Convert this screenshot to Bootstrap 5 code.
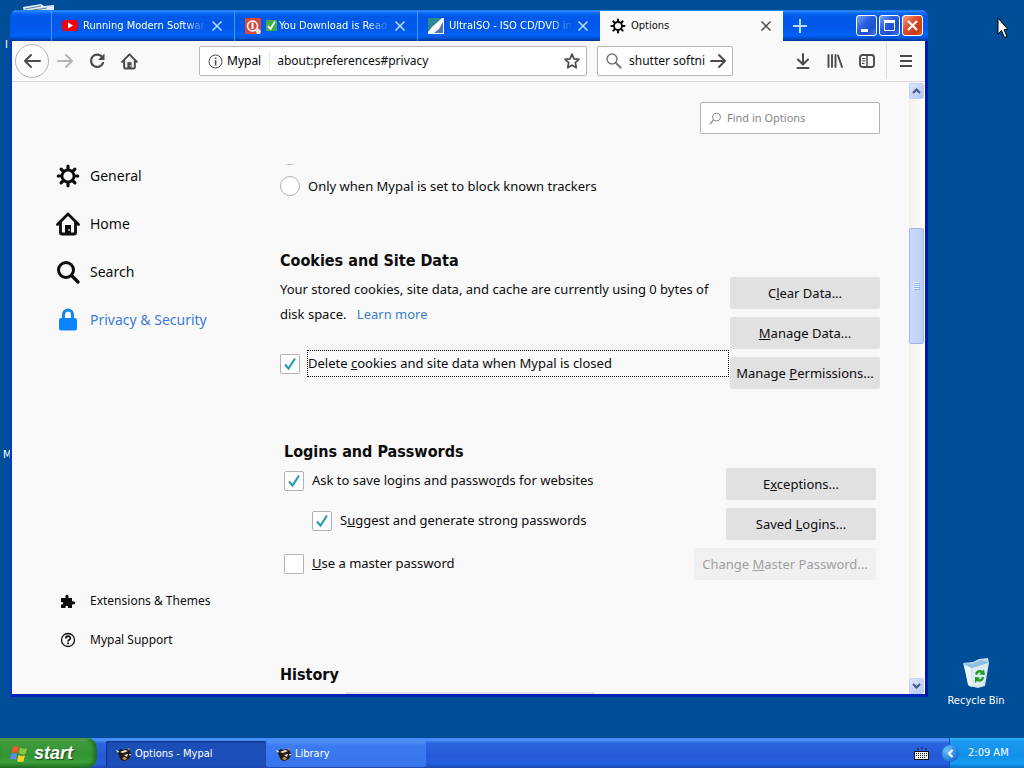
<!DOCTYPE html>
<html lang="en">
<head>
<meta charset="utf-8">
<meta name="viewport" content="width=device-width, initial-scale=1">
<title>Options - Mypal</title>
<link href="https://cdn.jsdelivr.net/npm/bootstrap@5.3.0/dist/css/bootstrap.min.css" rel="stylesheet">
<style>
:root{--ui:"DejaVu Sans Condensed","DejaVu Sans",sans-serif;--txt:"Noto Sans",sans-serif}
body{background:#004e98;font:11px/16px var(--ui);color:#0c0c0d}
button,input{font:inherit}
svg{flex:none;display:block}
.plain{border:0;background:none;padding:0;color:inherit;display:flex;align-items:center;justify-content:center}

/* desktop */
.desk{padding:10px 0 0 10px;min-height:0}
.behind{position:absolute;z-index:0;color:#fff}
.desk-side{width:96px;flex:none}
.bin{color:#fff;text-decoration:none;gap:4px;margin-bottom:29px}
.pointer{position:absolute;right:15px;top:17px}

/* window frame */
.win{background:#f9f9fa;border:solid #0a33d6;border-width:0 3px 3px 2px;border-right-color:#0018b0;border-bottom-color:#0621b5;border-radius:7px 7px 0 0;min-width:0;margin-bottom:41px}
.title-bar{flex:none;height:31px;margin:0 -3px 0 -2px;padding:0 5px 0 41px;border-radius:7px 7px 0 0;color:#fff;background:linear-gradient(#0a6cf0 0,#2f8dff 1px,#0a6af5 3px,#0058e8 6px,#0059ea 60%,#0062f8 80%,#0055dc 28px,#003ca0 30px,#0036a0)}
.tab-item{flex:0 1 183px;min-width:0;border-left:1px solid #4a94f4;padding:0 11px 0 10px;gap:5px}
.tab-item.on{background:#f9f9fa;color:#0c0c0d;border-top:1px solid #2090f8;border-left:0}
.tab-item .name{flex:1;min-width:0;overflow:hidden;white-space:nowrap;color:inherit;text-decoration:none;-webkit-mask-image:linear-gradient(90deg,#000 82%,transparent);mask-image:linear-gradient(90deg,#000 82%,transparent)}
.tab-item.on .name{-webkit-mask-image:none;mask-image:none}
.tab-item .plain{color:#b9dcff}
.tab-item.on .plain{color:#4a4a4f}
.new-tab{width:34px;color:#b9dcff}
.caps{gap:2px}
.cap{width:21px;height:21px;border:1px solid #fff;border-radius:3px;background:linear-gradient(135deg,#7aa4f6,#2a5fe0 40%,#1d4fd0 70%,#3d78ee);padding:0}
.cap.shut{background:linear-gradient(135deg,#f2a088,#e0502c 40%,#c93a14 75%,#e4613a)}

/* toolbar */
.tools{flex:none;height:41px;padding:0 3px;border-bottom:1px solid #dcdcdd;color:#4a4a4f}
.tool{width:32px;height:32px}
.back{width:34px;height:34px;border:1px solid #b4b4b6;border-radius:50%;background:#fdfdfe}
.field{height:30px;background:#fff;border:1px solid #b8b8ba;border-radius:2px}
.field input,.find input{border:0;background:none;outline:0;padding:0;min-width:0;flex:1;color:#0c0c0d}
.addr{flex:1;margin-left:54px;padding:0 6px 0 8px;font:12px/18px var(--txt);min-width:0}
.ident{gap:4px;padding-right:8px;margin-right:7px;border-right:1px solid #e4e4e5}
.seek{width:136px;margin:0 54px 0 10px;padding:0 5px 0 8px;gap:7px;font:12px/18px var(--txt)}
.seek button{margin-left:-7px}
.rule{width:1px;height:36px;background:#dcdcdd;margin:0 3px}

/* options page */
.cats{width:268px;padding:70px 0 35px 44px;flex:none}
.cat{height:48px;gap:10px;font:14px/20px var(--txt);color:#0c0c0d;text-decoration:none}
.cat.on{color:#3a7be0}
.foot{height:39px;gap:10px;font:12px/18px var(--txt);color:#0c0c0d;text-decoration:none}
.foot svg,.cat svg{width:24px}
.pane{flex:1;min-width:0;padding-right:29px;font:13px/25px var(--txt)}
.find{width:180px;height:32px;flex:none;margin:20px 0 30px;background:#fff;border:1px solid #b1b1b3;border-radius:2px;padding:0 8px;gap:5px;color:#8a8a8c;font:11px/16px var(--txt)}
.find input::placeholder{color:#858587;opacity:1}
.view{min-height:0;overflow:hidden}
.cut{height:1px;margin-bottom:11px;overflow:hidden}
.tick{appearance:none;-webkit-appearance:none;width:20px;height:20px;flex:none;margin:0;border:1px solid #b1b1b3;border-radius:2px;background:#fff}
.tick[type=radio]{border-radius:50%}
.tick:checked{background:#fff url("data:image/svg+xml,%3Csvg xmlns='http://www.w3.org/2000/svg' viewBox='0 0 18 18'%3E%3Cpath d='M4 9.500l3.500 4L14 3.500' fill='none' stroke='%232596b0' stroke-width='2'/%3E%3C/svg%3E") center/18px no-repeat}
.sect{font:bold 16px/22px var(--ui);margin:0}
.cookies{margin-top:54px}
.usage{margin:5px 0 23px}
.cookies .acts{padding-top:5px}
.logins{margin:52px 4px 0}
.logins .sect{margin-bottom:5px}
.opt{height:25px}
.opt.inner{margin:15px 0 18px 28px}
.acts{gap:8px;align-items:flex-end;flex:none}
.act{min-width:150px;height:32px;border:0;border-radius:2px;background:#e1e1e2;color:#0c0c0d;font:13px/20px var(--txt);padding:0 6px}
.act:disabled{background:#f0f0f1;color:#a0a0a2}
.act.wide{min-width:182px}
.ring{outline:1px dotted #000;outline-offset:-1px;line-height:27px;padding-left:1px;flex:1;margin:0 1px 0 7px}
.link{color:#3a7fd0;text-decoration:none;margin-left:7px}
.past{margin-top:84px}
.stub{height:20px;width:250px;margin:6px 0 0 65px;background:#e1e1e6}
.bar{width:16px;flex:none;background:linear-gradient(90deg,#f3f1ec,#fefefb);padding-top:1px}
.arrow{width:15px;height:16px;border-radius:2px;background:linear-gradient(135deg,#dce6ff,#b4c6f6);border:1px solid #c2d0f4;color:#40568c}
.thumb{width:15px;height:116px;margin-top:129px;border:1px solid #9db5ee;border-radius:2px;background:linear-gradient(90deg,#cddafe,#bccffb)}

/* taskbar */
.taskbar{flex:none;height:30px;color:#fff;background:linear-gradient(#3f86f0 0,#4b94f8 2px,#2a66e0 5px,#2459d8 60%,#2561e0 85%,#1c46b0)}
.start{width:97px;color:#fff;border-radius:0 10px 10px 0;background:linear-gradient(#6cb868 0,#3f9a3d 4px,#339433 60%,#3ca03a 80%,#227522);box-shadow:inset -3px 0 4px #1d6a20;font:italic bold 18px/24px "Liberation Sans",sans-serif;text-shadow:1px 1px 1px #1c451c;gap:5px;justify-content:flex-start;padding-left:10px}
.task{width:160px;height:26px;margin-top:3px;border-radius:2px;background:linear-gradient(#5592fa,#3b7af0 5px,#3874ec);color:#fff;gap:3px;justify-content:flex-start;padding-left:10px}
.task.on{background:#1c4eb8;box-shadow:inset 1px 1px 2px #0c2f80;margin-left:9px}
.tray{width:75px;background:linear-gradient(#2fb4f4 0,#1a9af0 3px,#1190ea 60%,#139cf2 85%,#0c72c4);border-left:1px solid #0a50a8}
.chev{width:17px;height:17px;flex:none;margin:0 9px 0 -8px;border-radius:50%;background:radial-gradient(circle at 30% 30%,#6cc4f8,#1a74d8 70%);color:#fff}
</style>
</head>
<body class="vh-100 overflow-hidden position-relative d-flex flex-column">

<svg width="0" height="0" class="position-absolute" aria-hidden="true">
  <symbol id="gear" viewBox="0 0 24 24"><g fill="none" stroke="currentColor"><circle cx="12" cy="12" r="6" stroke-width="2.800"/><path stroke-width="3.200" stroke-linecap="round" d="M12 2.200v3M12 18.800v3M2.200 12h3M18.800 12h3M5.100 5.100l2 2M16.900 16.900l2 2M18.900 5.100l-2 2M7.100 16.900l-2 2"/></g></symbol>
  <symbol id="x" viewBox="0 0 12 12"><path d="M1.500 1.500l9 9M10.500 1.500l-9 9" stroke="currentColor" stroke-width="1.500"/></symbol>
  <symbol id="house" viewBox="0 0 24 24"><path d="M1.500 12.500L12 2l10.500 10.500M4.500 11v9.500a1.500 1.500 0 0 0 1.500 1.500h12a1.500 1.500 0 0 0 1.500-1.500V11" fill="none" stroke="currentColor" stroke-width="2.800" stroke-linecap="round" stroke-linejoin="round"/><path d="M9 22v-9h6v9z" fill="currentColor"/><path d="M12.500 17h1.200v2h-1.200z" fill="#fff"/></symbol>
  <symbol id="badger" viewBox="0 0 16 16"><path d="M1 5l4-2 2 1 4-1 3 2 1 4-2 4-5 2-3-1-2-4z" fill="#221a14"/><path d="M4 6l5-2 3 1-5 2zM8 9l4-1-1 3z" fill="#f3e6cc"/><path d="M6 12l3-1 2 2-3 1zM11 3l2-1 1 2z" fill="#d89a3c"/><path d="M0 4l3 1-1 2zM13 8h2l-1 2z" fill="#fff"/></symbol>
</svg>

<!-- desktop items partly covered by the window -->
<svg class="behind" style="left:22px;top:2px" width="34" height="12"><path d="M1 5l18-3 3 2 10-1v9H2z" fill="#dfe9f2"/><path d="M3 7l16-3M5 9l20-3" stroke="#4f86b8"/></svg>
<span class="behind" style="left:5px;top:37px">I</span>
<span class="behind" style="left:3px;top:447px">M</span>

<div class="desk d-flex flex-grow-1 position-relative">
  <main class="win d-flex flex-column flex-grow-1">
    <header class="title-bar d-flex align-items-stretch">
      <div class="tab-item d-flex align-items-center">
        <svg width="16" height="16"><rect y="2" width="16" height="11" rx="3" fill="#f00010"/><path d="M6 4.500v6l5-3z" fill="#fff"/></svg>
        <a class="name" href="#">Running Modern Software</a>
        <button class="plain" aria-label="Close tab"><svg width="12" height="12"><use href="#x"/></svg></button>
      </div>
      <div class="tab-item d-flex align-items-center">
        <svg width="16" height="16"><rect width="16" height="16" rx="1" fill="#d84a3c"/><circle cx="7.500" cy="8" r="5" fill="none" stroke="#fff" stroke-width="1.500"/><path d="M6.500 4.500h2V11h-2z" fill="#fff"/><path d="M10 12l3-2 3 3-1 3h-3z" fill="#e8dfe0"/></svg>
        <a class="name d-flex align-items-center" style="gap:2px" href="#"><svg width="11" height="11"><rect width="11" height="11" rx="1" fill="#3fae49"/><path d="M2 6l2.500 3L9 1.500" fill="none" stroke="#fff" stroke-width="1.800"/></svg><span>You Download is Ready</span></a>
        <button class="plain" aria-label="Close tab"><svg width="12" height="12"><use href="#x"/></svg></button>
      </div>
      <div class="tab-item d-flex align-items-center">
        <svg width="16" height="16"><path d="M0 0h16v16H0z" fill="#f3f7f8"/><path d="M0 0h14L4 9 0 14z" fill="#2a8c90"/><path d="M15 4v11H6l5-4z" fill="#5270b4"/><path d="M3 13l4-6 8-6-5 8z" fill="#fff"/></svg>
        <a class="name" href="#">UltraISO - ISO CD/DVD image</a>
        <button class="plain" aria-label="Close tab"><svg width="12" height="12"><use href="#x"/></svg></button>
      </div>
      <div class="tab-item on d-flex align-items-center">
        <svg width="16" height="16"><use href="#gear"/></svg>
        <a class="name" href="#">Options</a>
        <button class="plain" aria-label="Close tab"><svg width="12" height="12"><use href="#x"/></svg></button>
      </div>
      <button class="plain new-tab" aria-label="New tab"><svg width="14" height="14"><path d="M7 0v14M0 7h14" stroke="currentColor" stroke-width="2"/></svg></button>
      <div class="caps d-flex align-items-center ms-auto">
        <button class="cap" aria-label="Minimize"><svg width="19" height="19"><path d="M4 13h7v3H4z" fill="#fff"/></svg></button>
        <button class="cap" aria-label="Maximize"><svg width="19" height="19"><path d="M4.500 5.500h10v9h-10z" fill="none" stroke="#fff"/><path d="M4 4h11v3H4z" fill="#fff"/></svg></button>
        <button class="cap shut" aria-label="Close"><svg width="19" height="19"><path d="M5 5l9 9M14 5l-9 9" stroke="#fff" stroke-width="2.200"/></svg></button>
      </div>
    </header>

    <nav class="tools d-flex align-items-center" aria-label="Browser toolbar">
      <button class="plain back" aria-label="Back"><svg width="18" height="16"><path d="M17 8H2M8 2L2 8l6 6" fill="none" stroke="currentColor" stroke-width="2" stroke-linecap="round" stroke-linejoin="round"/></svg></button>
      <button class="plain tool" aria-label="Forward" disabled><svg width="17" height="16"><path d="M1 8h14M9 2l6 6-6 6" fill="none" stroke="#b4b4b6" stroke-width="2" stroke-linecap="round" stroke-linejoin="round"/></svg></button>
      <button class="plain tool" aria-label="Reload"><svg width="16" height="16"><path d="M13.500 4.500A6.200 6.200 0 1 0 14 10" fill="none" stroke="currentColor" stroke-width="2.200" stroke-linecap="round"/><path d="M15.500.500v6.500H9z" fill="currentColor"/></svg></button>
      <button class="plain tool" aria-label="Home"><svg width="17" height="17"><use href="#house"/></svg></button>
      <div class="addr field d-flex align-items-center">
        <span class="ident d-flex align-items-center"><svg width="15" height="15"><circle cx="7.500" cy="7.500" r="6.500" fill="none" stroke="currentColor"/><path d="M6.800 3.500h1.600v1.600H6.800zM6.800 6.300h1.600v5.200H6.800z" fill="currentColor"/></svg><span class="text-black">Mypal</span></span>
        <input type="text" aria-label="Address" value="about:preferences#privacy">
        <button class="plain" aria-label="Bookmark this page"><svg width="16" height="16"><path d="M8 1.200l2 4.600 5 .5-3.700 3.400 1 5L8 12.200 3.700 14.700l1-5L1 6.300l5-.5z" fill="none" stroke="currentColor" stroke-width="1.700" stroke-linejoin="round"/></svg></button>
      </div>
      <div class="seek field d-flex align-items-center">
        <svg width="16" height="16"><circle cx="6" cy="6" r="5" fill="none" stroke="#77777a" stroke-width="1.500"/><path d="M9.700 9.700l5.500 5.500" stroke="#77777a" stroke-width="2"/></svg>
        <input type="text" aria-label="Search" value="shutter softni">
        <button class="plain" aria-label="Go"><svg width="17" height="14"><path d="M1 7h14M9 1l6 6-6 6" fill="none" stroke="currentColor" stroke-width="1.800" stroke-linecap="round" stroke-linejoin="round"/></svg></button>
      </div>
      <button class="plain tool" aria-label="Downloads"><svg width="14" height="16"><path d="M7 1v10M2 6.500l5 5 5-5M1.500 15h11" fill="none" stroke="currentColor" stroke-width="2" stroke-linecap="round" stroke-linejoin="round"/></svg></button>
      <button class="plain tool" aria-label="Library"><svg width="16" height="16"><path d="M1.500 2v12M5 2v12M8.500 2v12M11 2.500l4 11.500" stroke="currentColor" stroke-width="1.900" stroke-linecap="round"/></svg></button>
      <button class="plain tool" aria-label="Sidebars"><svg width="16" height="14"><rect x="1" y="1" width="14" height="12" rx="2.500" fill="none" stroke="currentColor" stroke-width="1.900"/><path d="M8 1v12" stroke="currentColor" stroke-width="1.500"/><path d="M3 4.500h3.500M3 7h3.500M3 9.500h2.500" stroke="currentColor"/></svg></button>
      <span class="rule"></span>
      <button class="plain tool" aria-label="Menu"><svg width="12" height="12"><path d="M0 1h12M0 6h12M0 11h12" stroke="currentColor" stroke-width="2"/></svg></button>
    </nav>

    <div class="d-flex flex-grow-1" style="min-height:0">
      <nav class="cats d-flex flex-column" aria-label="Categories">
        <a class="cat d-flex align-items-center" href="#"><svg height="24"><use href="#gear"/></svg>General</a>
        <a class="cat d-flex align-items-center" href="#"><svg height="24"><use href="#house"/></svg>Home</a>
        <a class="cat d-flex align-items-center" href="#"><svg height="24"><circle cx="10" cy="10" r="7.500" fill="none" stroke="currentColor" stroke-width="3"/><path d="M15.500 15.500l6.500 6.500" stroke="currentColor" stroke-width="3.200" stroke-linecap="round"/></svg>Search</a>
        <a class="cat on d-flex align-items-center" href="#"><svg height="24"><path d="M7.500 11V6.500a4.500 4.500 0 0 1 9 0V11" fill="none" stroke="#1486e8" stroke-width="3"/><rect x="3" y="10" width="18" height="12.500" rx="2" fill="#0a84ff"/></svg>Privacy &amp; Security</a>
        <a class="foot d-flex align-items-center mt-auto" href="#"><svg height="16"><path d="M5 5h4.500c-1-4 4-4.500 3 0H16v3.500c4-1 4.500 3.500 0 3V15h-4c.500-3-3-3-2.500 0H5v-3.500c3 .500 3-3 0-2.500z" fill="currentColor"/></svg>Extensions &amp; Themes</a>
        <a class="foot d-flex align-items-center" href="#"><svg height="16"><circle cx="12" cy="8" r="6.500" fill="none" stroke="currentColor" stroke-width="1.300"/><path d="M9.800 6.500c0-3 4.500-3 4.500-.3 0 1.600-2.200 1.400-2.200 3.200M12.100 10.600v1.700" fill="none" stroke="currentColor" stroke-width="1.700"/></svg>Mypal Support</a>
      </nav>

      <div class="pane d-flex flex-column">
        <label class="find d-flex align-items-center ms-auto"><svg width="13" height="13"><circle cx="7.500" cy="5" r="4" fill="none" stroke="currentColor"/><path d="M4.500 8L1 12" stroke="currentColor" stroke-width="1.200"/></svg><input type="search" aria-label="Find in Options" placeholder="Find in Options"></label>

        <div class="view d-flex flex-column flex-grow-1">
          <div class="cut d-flex align-items-end flex-shrink-0"><input class="tick" type="radio" name="dnt" aria-label="Always"></div>
          <div class="d-flex align-items-center flex-shrink-0" style="height:20px">
            <input class="tick" type="radio" name="dnt" id="dnt"><label class="ms-2" for="dnt">Only when Mypal is set to block known trackers</label>
          </div>

          <section class="cookies flex-shrink-0">
            <h2 class="sect">Cookies and Site Data</h2>
            <div class="d-flex">
              <div class="flex-grow-1">
                <p class="usage">Your stored cookies, site data, and cache are currently using 0 bytes of disk space. <a class="link" href="#">Learn more</a></p>
                <div class="d-flex align-items-center">
                  <input class="tick" type="checkbox" id="del" checked><label class="ring" for="del">Delete <u>c</u>ookies and site data when Mypal is closed</label>
                </div>
              </div>
              <div class="acts d-flex flex-column">
                <button class="act">C<u>l</u>ear Data...</button>
                <button class="act"><u>M</u>anage Data...</button>
                <button class="act">Manage <u>P</u>ermissions...</button>
              </div>
            </div>
          </section>

          <section class="logins flex-shrink-0">
            <h2 class="sect">Logins and Passwords</h2>
            <div class="d-flex">
              <div class="flex-grow-1">
                <div class="opt d-flex align-items-center"><input class="tick" type="checkbox" id="ask" checked><label class="ms-2" for="ask">Ask to save logins and passwo<u>r</u>ds for websites</label></div>
                <div class="opt inner d-flex align-items-center"><input class="tick" type="checkbox" id="gen" checked><label class="ms-2" for="gen">S<u>u</u>ggest and generate strong passwords</label></div>
                <div class="opt d-flex align-items-center"><input class="tick" type="checkbox" id="mst"><label class="ms-2" for="mst"><u>U</u>se a master password</label></div>
              </div>
              <div class="acts d-flex flex-column">
                <button class="act">E<u>x</u>ceptions...</button>
                <button class="act">Saved <u>L</u>ogins...</button>
                <button class="act wide" disabled>Change <u>M</u>aster Password...</button>
              </div>
            </div>
          </section>

          <section class="past flex-shrink-0">
            <h2 class="sect">History</h2>
            <div class="stub"></div>
          </section>
        </div>
      </div>

      <div class="bar d-flex flex-column">
        <button class="plain arrow" aria-label="Scroll up"><svg width="9" height="6"><path d="M1 5l3.500-3.500L8 5" fill="none" stroke="currentColor" stroke-width="2"/></svg></button>
        <div class="thumb d-flex align-items-center justify-content-center"><svg width="7" height="8"><path d="M0 .5h6M0 2.500h6M0 4.500h6M0 6.500h6" stroke="#eef4ff"/><path d="M1 1.500h6M1 3.500h6M1 5.500h6M1 7.500h6" stroke="#8cb0f8"/></svg></div>
        <button class="plain arrow mt-auto" aria-label="Scroll down"><svg width="9" height="6"><path d="M1 1l3.500 3.500L8 1" fill="none" stroke="currentColor" stroke-width="2"/></svg></button>
      </div>
    </div>
  </main>

  <aside class="desk-side d-flex flex-column align-items-center justify-content-end">
    <a class="bin d-flex flex-column align-items-center" href="#">
      <svg width="32" height="32"><path d="M3 6l10-1 6-3 9-1 1 5-4 23-7 2-9-2z" fill="#c5ddea"/><path d="M3 6l9 1 9-4 8 2-6 5-12 1z" fill="#8fbfe0"/><path d="M4 8l7 3 1 19-4-2z" fill="#e9f5fa"/><path d="M12 11l16-5-4 22-6 2-6-1z" fill="#dcebf0"/><path d="M15 17c1-4 5-5 8-3l1-2 1 6-6-.500 2-1.500c-2-1-3 0-4 2zM24 20c0 4-4 6-7 4l-2 2v-6l5 .500-1.500 1.500c2 .700 3-.500 3.500-2z" fill="#249a22"/></svg>
      <span>Recycle Bin</span>
    </a>
  </aside>
</div>

<svg class="pointer" width="12" height="22" aria-hidden="true"><path d="M1 1v16l3.500-3.500L7.500 20.500l2.500-1-3-7H11z" fill="#fff" stroke="#000"/></svg>

<footer class="taskbar d-flex align-items-stretch">
  <button class="plain start"><svg width="19" height="19"><path d="M3 3q3-2 6 0L7.500 9q-3-1.500-6 0z" fill="#f0582c"/><path d="M10 3.500q3 2 7 .500L15.500 10q-4 1-6.500-.5z" fill="#8cc83c"/><path d="M1.200 10q3-1.500 6 0L5.700 16q-3-2-6 0z" fill="#5c8cf0"/><path d="M8.500 11q3 1.500 6.500.500L13.500 17.500q-3.500 1-6.500-.5z" fill="#fcd034"/></svg>start</button>
  <button class="plain task on"><svg width="16" height="16"><use href="#badger"/></svg>Options - Mypal</button>
  <button class="plain task"><svg width="16" height="16"><use href="#badger"/></svg>Library</button>
  <span class="d-flex align-items-center ms-auto me-3 pe-1"><svg width="15" height="13"><path d="M3 2h2M7 1h2M11 2h2" stroke="#101010"/><rect x=".5" y="4.500" width="14" height="8" fill="#f4f4ee" stroke="#111"/><path d="M2 6.500h11M2 8.500h11M4 10.500h7" stroke="#111" stroke-dasharray="1 1"/></svg></span>
  <div class="tray d-flex align-items-center"><button class="plain chev" aria-label="Show hidden icons"><svg width="7" height="9"><path d="M5.500 1L2 4.500 5.500 8" fill="none" stroke="currentColor" stroke-width="2"/></svg></button><span>2:09 AM</span></div>
</footer>
<script src="https://cdn.jsdelivr.net/npm/bootstrap@5.3.0/dist/js/bootstrap.bundle.min.js"></script>
</body>
</html>
